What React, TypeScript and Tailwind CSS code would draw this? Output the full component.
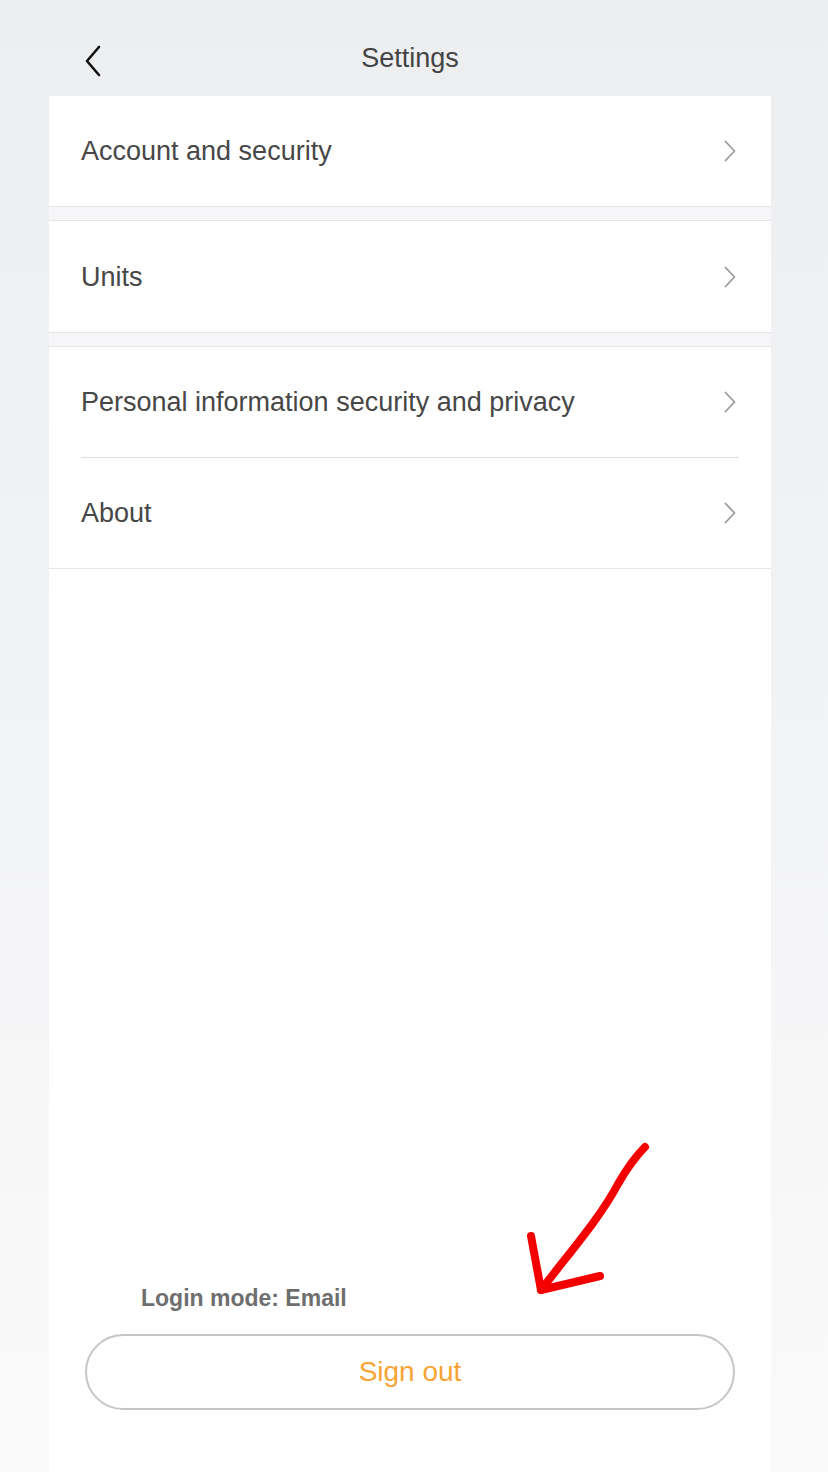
const font = { fontFamily: '"Liberation Sans", Arial, sans-serif' };

function Chevron() {
  return (
    <svg width="14" height="22" viewBox="0 0 14 22" fill="none">
      <path d="M2.5 1.5 L11.5 11 L2.5 20.5" stroke="#9a9a9a" strokeWidth="1.8" strokeLinecap="round" strokeLinejoin="round" />
    </svg>
  );
}

function Row({ label }: { label: string }) {
  return (
    <div className="flex h-[110px] items-center justify-between pl-8 pr-[34px]">
      <span className="text-[27px] text-[#474747]">{label}</span>
      <Chevron />
    </div>
  );
}

function Gap() {
  return <div className="h-[15px] border-y border-[#e6e6e8] bg-[#f6f6f8]" />;
}

export default function App() {
  return (
    <div
      className="relative flex h-[1472px] w-full flex-col bg-gradient-to-b from-[#edeef0] via-[#f2f3f5] to-[#fafafa]"
      style={font}
    >
      {/* header */}
      <div className="relative flex h-[96px] shrink-0 justify-center pt-[42px] pr-[8px]">
        <button className="absolute left-[78px] top-[40px] p-1">
          <svg width="22" height="34" viewBox="0 0 22 34" fill="none">
            <path d="M17 3 L5 17 L17 31" stroke="#111" strokeWidth="2.6" strokeLinecap="round" strokeLinejoin="round" />
          </svg>
        </button>
        <h1 className="text-[27px] leading-[32px] text-[#444]">Settings</h1>
      </div>

      {/* content column */}
      <div className="ml-[49px] flex w-[722px] flex-1 flex-col bg-white">
        <Row label="Account and security" />
        <Gap />
        <div className="h-px" />
        <Row label="Units" />
        <Gap />
        <Row label="Personal information security and privacy" />
        <div className="mx-8 h-px bg-[#dedede]" />
        <Row label="About" />
        <div className="h-px bg-[#e6e6e8]" />

        <div className="flex-1" />

        <div className="pl-[92px] text-[23px] font-bold leading-[28px] text-[#6e6e6e]">Login mode: Email</div>
        <div className="mt-[22px] mb-[62px] px-9">
          <button className="flex h-[76px] w-full items-center justify-center rounded-full border-2 border-[#c6c6c6] text-[28px] text-[#f7a434]">
            Sign out
          </button>
        </div>
      </div>

      {/* red annotation arrow */}
      <svg className="pointer-events-none absolute left-0 top-0" width="828" height="1472" fill="none">
        <path
          d="M645 1147 C634 1158 626 1170 618 1184 C600 1218 570 1252 541 1290"
          stroke="#f40000"
          strokeWidth="8"
          strokeLinecap="round"
        />
        <path d="M531 1236 L541 1290 L600 1276" stroke="#f40000" strokeWidth="8" strokeLinecap="round" strokeLinejoin="round" />
      </svg>
    </div>
  );
}
